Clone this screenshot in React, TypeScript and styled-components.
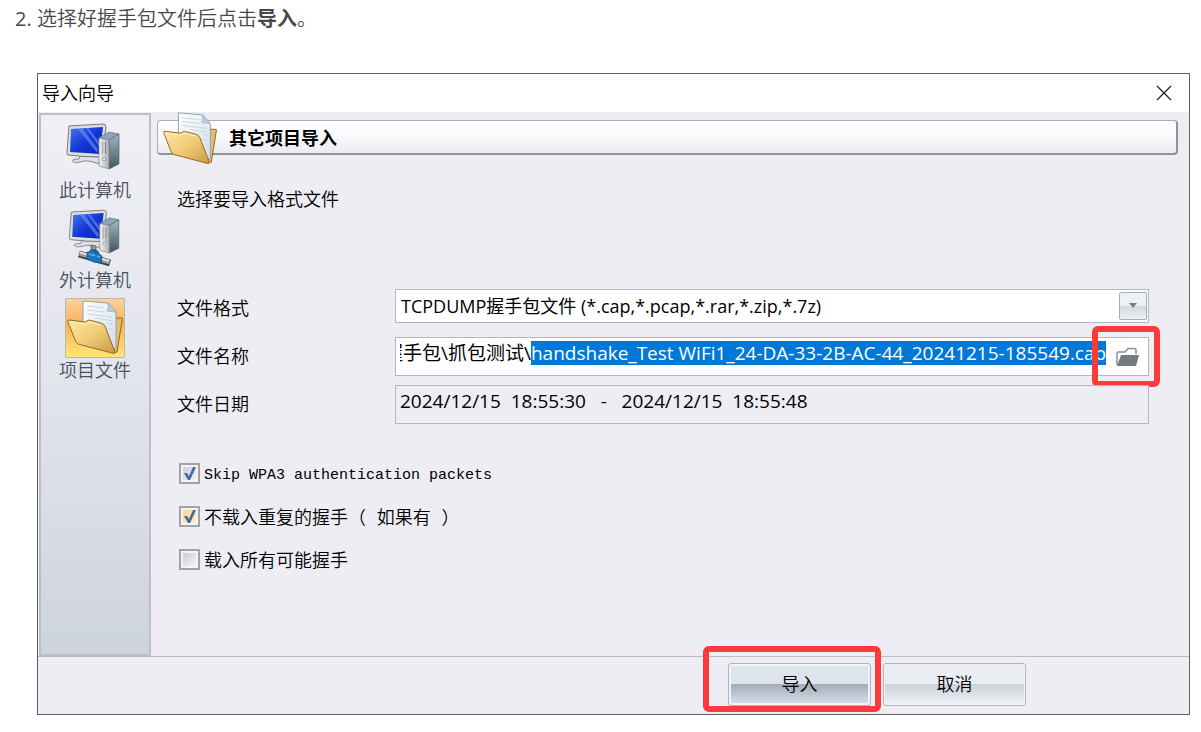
import React, { useLayoutEffect, useRef, useState } from 'react';
import styled, { createGlobalStyle, css } from 'styled-components';

const ui = '"Open Sans", "Noto Sans CJK SC", sans-serif';
const cjk = '"Noto Sans CJK SC", sans-serif';
const panel = '#eeedf3';

const GlobalStyle = createGlobalStyle`
  *, *::before, *::after { box-sizing: border-box; }
  body { margin: 0; background: #fff; color: #000; font-family: ${cjk}; }
  button, input, select { font: inherit; color: inherit; margin: 0; }
`;

const Steps = styled.ol`
  margin: 0;
  padding: 4px 11px 16px 37px;
  font-size: 20px;
  line-height: 28px;
  color: #484848;
  li::marker { font-family: ${ui}; }
`;
const StepText = styled.p`
  margin: 0 0 41px;
  font-weight: 350;
  strong { font-weight: 700; }
`;

const Dialog = styled.section`
  border: 1px solid #5f5f63;
  background: ${panel};
  color: #000;
  font-size: 18px;
  line-height: 24px;
  font-weight: 350;
`;
const TitleBar = styled.header`
  display: flex;
  align-items: center;
  justify-content: space-between;
  height: 38px;
  padding: 0 11px 0 4px;
  background: #fff;
`;
const Title = styled.h1`
  margin: 0;
  padding-bottom: 2px;
  font-size: 18px;
  font-weight: 350;
`;
const CloseButton = styled.button`
  display: grid;
  place-items: center;
  width: 28px;
  height: 28px;
  padding: 0;
  border: 0;
  background: none;
`;

const Body = styled.div`
  display: flex;
  height: 545px;
  border-bottom: 1px solid #b9bac2;
`;
const Sidebar = styled.nav`
  display: flex;
  flex-direction: column;
  align-items: center;
  gap: 8px;
  width: 112px;
  margin: 1px 1px 0 1px;
  padding-top: 3px;
  border: 2px solid #bcbfc8;
  background: linear-gradient(#f0eff5, #e4e6ed 45%, #ced4dc);
`;
const NavItem = styled.button`
  display: flex;
  flex-direction: column;
  align-items: center;
  padding: 0;
  border: 0;
  background: none;
  color: #485062;
  line-height: 22px;
`;
const NavIcon = styled.span<{ $active?: boolean }>`
  display: block;
  width: 60px;
  height: 60px;
  ${p => p.$active && css`
    border-radius: 2px;
    background: linear-gradient(#f9d3a2, #fbb765 35%, #fdb250 42%, #ffe67d);
    box-shadow: inset 0 0 0 1px #b9b6ae;
  `}
`;

const Main = styled.main`
  flex: 1;
  min-width: 0;
  padding: 8px 11px 0 5px;
`;
const Banner = styled.div`
  position: relative;
  display: flex;
  align-items: center;
  height: 35px;
  padding-left: 71px;
  border: 1px solid #a9abb8;
  border-right: 2px solid #919197;
  border-bottom: 2px solid #919197;
  border-radius: 4px;
  background: linear-gradient(#fff, #f8f8fb 50%, #ecebf0);
`;
const BannerIcon = styled.span`
  position: absolute;
  left: 3px;
  top: -11px;
  width: 58px;
  height: 58px;
`;
const BannerTitle = styled.h2`
  margin: 0;
  font-size: 18px;
  font-weight: 700;
`;
const Content = styled.form`
  padding: 31px 29px 0 20px;
`;
const Hint = styled.p`
  margin: 0 0 79px;
`;
const Row = styled.div`
  display: grid;
  grid-template-columns: 218px 1fr;
  align-items: center;
  min-height: 39px;
  margin-bottom: 9px;
  > label { padding-bottom: 4px; }
`;
const Field = styled.div<{ $short?: boolean; $muted?: boolean }>`
  position: relative;
  display: flex;
  align-items: center;
  height: ${p => (p.$short ? 34 : 39)}px;
  margin-top: ${p => (p.$short ? -6 : 0)}px;
  border: 1px solid #b4b5bd;
  background: ${p => (p.$muted ? panel : '#fff')};
  font-family: ${ui};
  font-weight: 400;
`;
const Select = styled.select`
  flex: 1;
  min-width: 0;
  height: 100%;
  padding: 0 36px 0 5px;
  border: 0;
  outline: 0;
  appearance: none;
  background: transparent;
`;
const Arrow = styled.span`
  position: absolute;
  right: 1px;
  top: 2px;
  display: grid;
  place-items: center;
  width: 28px;
  height: 28px;
  border: 1px solid #a4b0b5;
  border-radius: 2px;
  background: linear-gradient(#eef1f5 50%, #d3d7de 50%, #eef0f4);
  pointer-events: none;
`;
const TextInput = styled.input`
  flex: 1;
  min-width: 0;
  height: 24px;
  margin: 0 4px 7px;
  padding: 0;
  border: 0;
  outline: 0;
  background: transparent;
  font-size: 19px;
  line-height: 24px;
  &::selection { background: #0078d7; color: #fff; }
`;
const BrowseButton = styled.button`
  display: grid;
  place-items: center;
  width: 38px;
  height: 100%;
  padding: 0 3px 0 0;
  border: 0;
  background: none;
`;
const marker = css`
  content: '';
  position: absolute;
  border: 6px solid #fd3a3a;
  border-radius: 6px;
  pointer-events: none;
`;
const Browse = styled.div`
  position: relative;
  height: 100%;
  &::after {
    ${marker}
    inset: -12px -12px -12px -18px;
  }
`;

const Checks = styled.div`
  display: grid;
  gap: 15px;
  padding: 26px 0 0 2px;
`;
const Check = styled.label<{ $mono?: boolean }>`
  display: flex;
  align-items: center;
  gap: 4px;
  height: 28px;
  white-space: pre;
  font-family: "Liberation Mono", "Noto Sans CJK SC", monospace;
  ${p => p.$mono && css`font-size: 15px;`}
`;
const CheckText = styled.span`
  padding-top: 5px;
`;
const CheckWrap = styled.span`
  position: relative;
  display: block;
  width: 21px;
  height: 21px;
  svg { position: absolute; inset: 0; pointer-events: none; }
`;
const CheckInput = styled.input<{ $warm?: boolean }>`
  display: block;
  width: 21px;
  height: 21px;
  appearance: none;
  border: 2px solid #a2a3a6;
  background: ${p => p.$warm
    ? 'linear-gradient(135deg, #fbd388, #fff0cf)'
    : 'linear-gradient(135deg, #c3c9d3, #f7f7f9)'};
  box-shadow: inset 0 0 0 2px #f5f4f4;
`;

const Footer = styled.footer`
  display: flex;
  justify-content: flex-end;
  gap: 12px;
  padding: 6px 163px 8px 0;
`;
const ActionButton = styled.button<{ $primary?: boolean }>`
  width: 143px;
  height: 43px;
  padding: 0 0 3px;
  border: 1px solid #aab6ba;
  border-radius: 3px;
  box-shadow: inset 0 0 0 ${p => (p.$primary ? 2 : 1)}px #f1f4f6;
  background: ${p => p.$primary
    ? 'linear-gradient(#dde4ed 50%, #a4aebb 50%, #dae1ea)'
    : 'linear-gradient(#eaedf2 50%, #cdd2da 50%, #eff1f5)'};
`;
const Primary = styled.div`
  position: relative;
  &::after {
    ${marker}
    inset: -17px -10px -6px -25px;
  }
`;

function ComputerIcon({ network }: { network?: boolean }) {
  const id = network ? 'net' : 'pc';
  return (
    <svg width="60" height="60" viewBox="0 0 60 60" aria-hidden="true">
      <defs>
        <linearGradient id={id + 'Screen'} x1="0" y1="0" x2="1" y2="1">
          <stop offset="0" stopColor="#4777e6" />
          <stop offset=".5" stopColor="#1437d8" />
          <stop offset="1" stopColor="#0922a8" />
        </linearGradient>
        <linearGradient id={id + 'Side'} x1="0" y1="0" x2="0" y2="1">
          <stop offset="0" stopColor="#9fb6c6" />
          <stop offset="1" stopColor="#46545f" />
        </linearGradient>
        <linearGradient id={id + 'Front'} x1="0" y1="0" x2="1" y2="0">
          <stop offset="0" stopColor="#f6f6f6" />
          <stop offset="1" stopColor="#a9adb0" />
        </linearGradient>
      </defs>
      <g transform={network ? 'translate(2.500 -3.500) scale(.95)' : undefined}>
        <path d="M15 38 14 41 Q7 41 7 43 Q10 46 15 44 Q22 41 34 46 L35 39Z" fill="#dedfe0" stroke="#88898c" />
        <path d="M4 8 38 6 Q41 6 41 9 L37 39 Q20 39 3 37 Q2 37 2 35Z" fill="#dcdedf" stroke="#77797c" />
        <path d="M6 11 38 9 35 36 5 34Z" fill={`url(#${id}Screen)`} />
        <path d="M13 11 17 10 33 31 32 35Z M21 10 23 10 36 26 35 30Z" fill="#6f95f5" opacity=".6" />
        <path d="M34 20 44 14 54 16 44 22Z" fill="#8ea5b5" stroke="#667784" strokeWidth=".7" />
        <path d="M44 22 54 16 54 46 44 51Z" fill={`url(#${id}Side)`} stroke="#526069" strokeWidth=".7" />
        <path d="M34 20 44 22 44 51 34 48Z" fill={`url(#${id}Front)`} stroke="#84888b" strokeWidth=".7" />
        <path d="M37.500 24V36" stroke="#aeb3b7" strokeWidth="1.500" />
        <path d="M40.500 24V36" stroke="#7c8287" />
        <circle cx="39" cy="41" r="1.800" fill="#dce5ed" stroke="#8a99a5" strokeWidth=".8" />
      </g>
      {network && (
        <g>
          <path d="M26 37V45H31V38Z" fill="#8f9499" stroke="#5b5f63" strokeWidth=".8" />
          <path d="M14 46 45 55" stroke="#3f4144" strokeWidth="7" />
          <path d="M14.500 45.500 44.500 54" stroke="#9b9c9c" strokeWidth="4.500" />
          <path d="M15 44.500 44 53" stroke="#f0f0ee" strokeWidth="1.600" />
          <path d="M24 44 Q25 41 29 42 Q34 42 34 46 L37 48 36 55 29 54 22 51 22 44Z" fill="#1c76bd" stroke="#134a7d" strokeWidth=".8" />
          <path d="M24 46 35 49" stroke="#5fb0e6" strokeWidth="1.800" />
          <path d="M28 42 31 43V49" fill="none" stroke="#0e4b86" strokeWidth=".9" />
        </g>
      )}
    </svg>
  );
}

function FolderIcon({ id, size }: { id: string; size: number }) {
  return (
    <svg width={size} height={size} viewBox="0 0 60 60" aria-hidden="true">
      <defs>
        <linearGradient id={id + 'Front'} x1="0" y1="0" x2="1" y2="1">
          <stop offset="0" stopColor="#fde8a0" />
          <stop offset=".5" stopColor="#f0cb77" />
          <stop offset="1" stopColor="#c99a45" />
        </linearGradient>
        <linearGradient id={id + 'Paper'} x1="0" y1="0" x2="1" y2="1">
          <stop offset="0" stopColor="#fff" />
          <stop offset="1" stopColor="#cfe0ec" />
        </linearGradient>
      </defs>
      <path d="M49 20 57 20 Q58 21 57 23 L52 54 48 55Z" fill="#e4bd68" stroke="#8d6427" />
      <path d="M18 3 43 5 51 14 51 50 46 52 18 30Z" fill={`url(#${id}Paper)`} stroke="#8ea0ad" />
      <path d="M43 5 Q44 10 42 13 L51 14Z" fill="#b8d0df" stroke="#8ea0ad" strokeWidth=".6" />
      <path d="M22 8 39 10M22 12 40 14M22 16 47 19M30 20 48 23M42 25 49 27M43 30 49 32M45 35 49 36" stroke="#ccd5dd" strokeWidth="1" />
      <path d="M4 22 20 24 24 22 36 25 Q39 26 40 28 L50 54 Q50 56 47 55 L13 46 Q11 45 10 42 L3 24 Q2 22 4 22Z" fill={`url(#${id}Front)`} stroke="#93692c" />
      <path d="M5 24 20 26 24 24 36 27" fill="none" stroke="#fff3c4" />
    </svg>
  );
}

const CloseIcon = () => (
  <svg width="16" height="16" viewBox="0 0 16 16" fill="none" stroke="#222" strokeWidth="1.300" aria-hidden="true">
    <path d="M1 1 15 15M15 1 1 15" />
  </svg>
);
const OpenFolderIcon = () => (
  <svg width="24" height="20" viewBox="0 0 24 20" aria-hidden="true">
    <path d="M1 18V6Q1 5 2 5H9L12 1.500H18Q20 1.500 20 3V7" fill="none" stroke="#8b8e96" strokeWidth="1.500" />
    <path d="M5 8H23L20 19H1Z" fill="#767882" />
  </svg>
);
const Tick = () => (
  <svg width="21" height="21" viewBox="0 0 21 21" aria-hidden="true">
    <path d="M5 10 8 10 10 13 14 4 17 4 11 17 9 17Z" fill="#426a9f" />
  </svg>
);

type CheckBoxProps = { label: string; checked?: boolean; warm?: boolean; mono?: boolean };
function CheckBox({ label, checked = false, warm, mono }: CheckBoxProps) {
  const [on, setOn] = useState(checked);
  return (
    <Check $mono={mono}>
      <CheckWrap>
        <CheckInput type="checkbox" $warm={warm} checked={on} onChange={e => setOn(e.target.checked)} />
        {on && <Tick />}
      </CheckWrap>
      <CheckText>{label}</CheckText>
    </Check>
  );
}

const folder = '握手包\\抓包测试\\';
const fileName = 'handshake_Test WiFi1_24-DA-33-2B-AC-44_20241215-185549.cap';

export default function App() {
  const fileRef = useRef<HTMLInputElement>(null);

  useLayoutEffect(() => {
    const input = fileRef.current;
    if (!input) return;
    input.focus();
    input.setSelectionRange(folder.length, input.value.length);
    input.scrollLeft = input.scrollWidth;
  }, []);

  return (
    <>
      <GlobalStyle />
      <Steps start={2}>
        <li>
          <StepText>选择好握手包文件后点击<strong>导入</strong>。</StepText>
          <Dialog aria-label="导入向导">
            <TitleBar>
              <Title>导入向导</Title>
              <CloseButton type="button" aria-label="关闭"><CloseIcon /></CloseButton>
            </TitleBar>
            <Body>
              <Sidebar>
                <NavItem type="button"><NavIcon><ComputerIcon /></NavIcon>此计算机</NavItem>
                <NavItem type="button"><NavIcon><ComputerIcon network /></NavIcon>外计算机</NavItem>
                <NavItem type="button"><NavIcon $active><FolderIcon id="nav" size={60} /></NavIcon>项目文件</NavItem>
              </Sidebar>
              <Main>
                <Banner>
                  <BannerIcon><FolderIcon id="banner" size={58} /></BannerIcon>
                  <BannerTitle>其它项目导入</BannerTitle>
                </Banner>
                <Content>
                  <Hint>选择要导入格式文件</Hint>
                  <Row>
                    <label htmlFor="format">文件格式</label>
                    <Field $short>
                      <Select id="format">
                        <option>TCPDUMP握手包文件 (*.cap,*.pcap,*.rar,*.zip,*.7z)</option>
                      </Select>
                      <Arrow>
                        <svg width="8" height="5" viewBox="0 0 8 5" aria-hidden="true"><path d="M0 0H8L4 5Z" fill="#777b82" /></svg>
                      </Arrow>
                    </Field>
                  </Row>
                  <Row>
                    <label htmlFor="file">文件名称</label>
                    <Field>
                      <TextInput id="file" ref={fileRef} defaultValue={folder + fileName} spellCheck={false} />
                      <Browse>
                        <BrowseButton type="button" aria-label="浏览"><OpenFolderIcon /></BrowseButton>
                      </Browse>
                    </Field>
                  </Row>
                  <Row>
                    <label htmlFor="date">文件日期</label>
                    <Field $muted>
                      <TextInput id="date" readOnly value="2024/12/15  18:55:30   -   2024/12/15  18:55:48" />
                    </Field>
                  </Row>
                  <Checks>
                    <CheckBox label="Skip WPA3 authentication packets" checked mono />
                    <CheckBox label="不载入重复的握手（ 如果有 ）" checked warm />
                    <CheckBox label="载入所有可能握手" />
                  </Checks>
                </Content>
              </Main>
            </Body>
            <Footer>
              <Primary><ActionButton type="button" $primary>导入</ActionButton></Primary>
              <ActionButton type="button">取消</ActionButton>
            </Footer>
          </Dialog>
        </li>
      </Steps>
    </>
  );
}
